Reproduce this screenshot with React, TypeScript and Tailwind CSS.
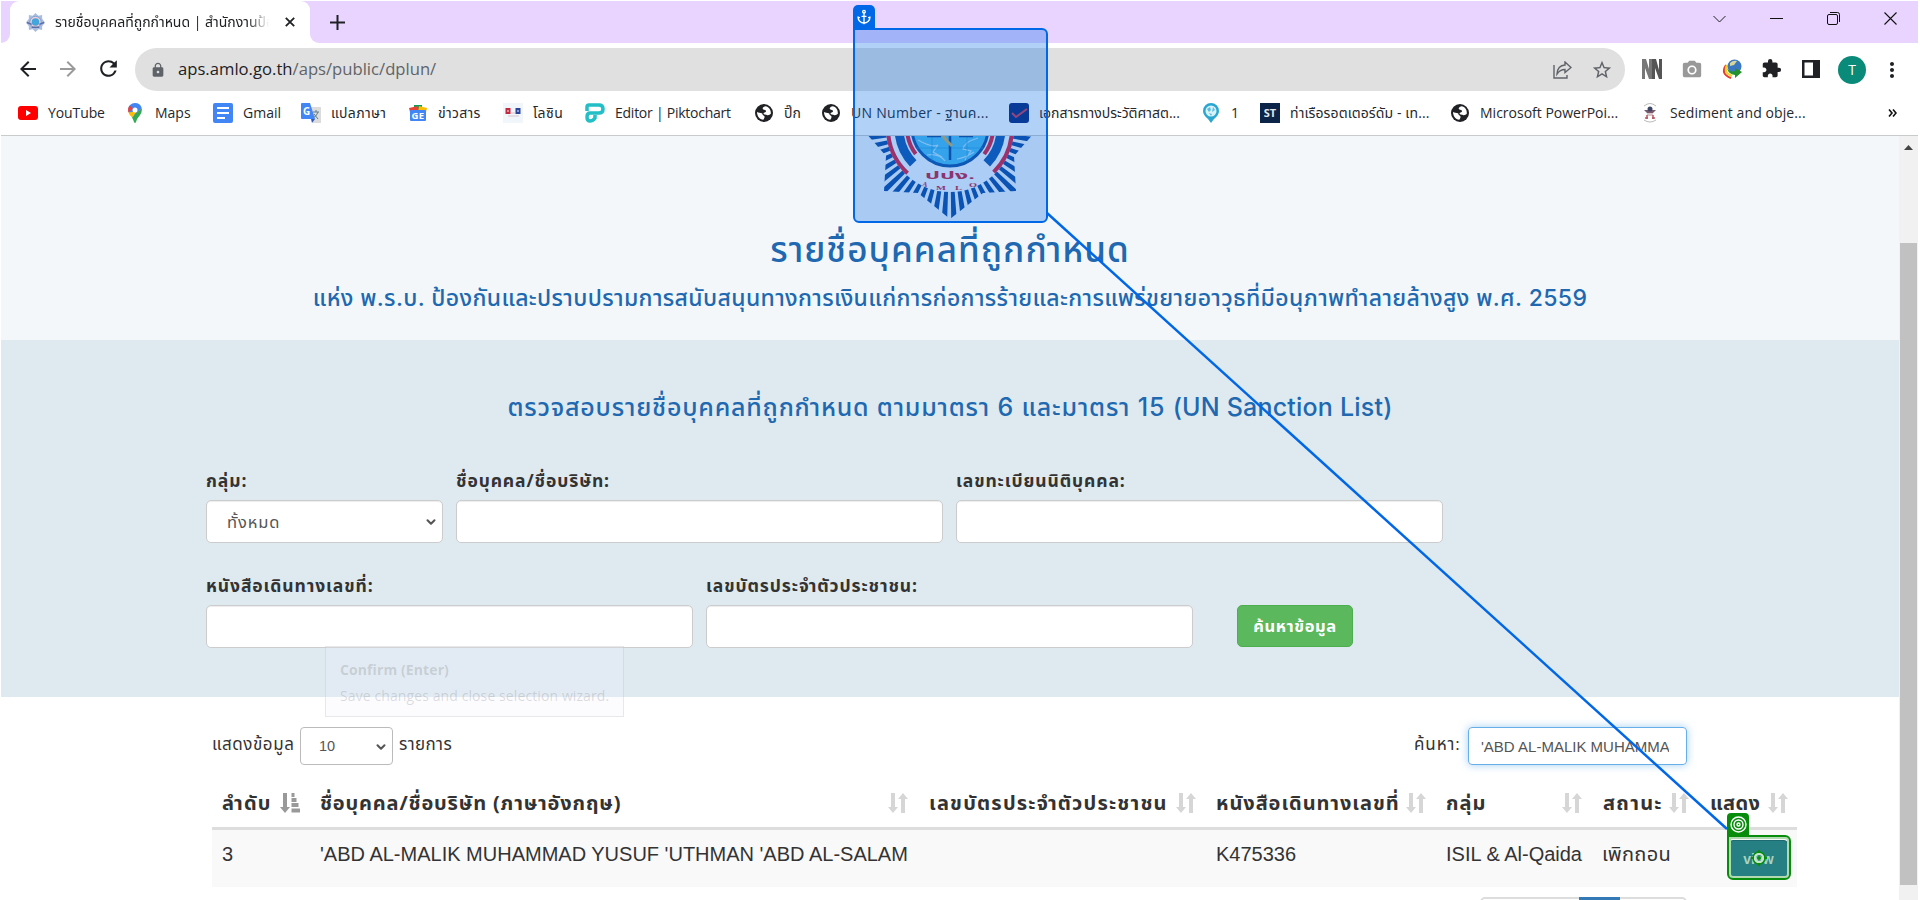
import type { ReactNode } from "react";
import { Anchor, ChevronDown } from "lucide-react";
import {
  MdArrowBack,
  MdArrowForward,
  MdCameraAlt,
  MdExtension,
  MdLock,
  MdMoreVert,
  MdRefresh,
  MdStarBorder,
} from "react-icons/md";

const UI = "font-['Open_Sans','Noto_Sans_Thai',sans-serif]";
const HEADING = "font-['Inter','Noto_Sans_Thai',sans-serif] font-medium whitespace-nowrap";

function Emblem() {
  return (
    <svg width="170" height="84" viewBox="0 0 170 84" className="block">
      <defs>
        <clipPath id="star">
          <path d="M0 -4H170L149 20L151 55L118 57L85 83L53 57L19 55L21 20Z" />
        </clipPath>
      </defs>
      <circle cx="85" cy="-8" r="75" fill="none" stroke="#0f4aa0" strokeWidth="50" strokeDasharray="4.600 3.400" clipPath="url(#star)" />
      <circle cx="85" cy="-8" r="64" fill="#f7f9fd" />
      <circle cx="85" cy="-8" r="62" fill="none" stroke="#e01c38" strokeWidth="4" strokeDasharray="50 95 50 500" transform="rotate(-1 85 -8)" />
      <circle cx="85" cy="-8" r="51" fill="none" stroke="#1357ab" strokeWidth="9" strokeDasharray="39 82 39 500" />
      <circle cx="85" cy="-8" r="43" fill="none" stroke="#e01c38" strokeWidth="4" strokeDasharray="28 79 28 500" />
      <circle cx="85" cy="-8" r="38" fill="#4dbdf0" stroke="#1352a2" strokeWidth="3" />
      <path d="M53 4q14 8 20 5l-5 7 9 5M113 2q-14 4-15 11l8 2-6 9M62 19q12-2 18 6M92 23q8-1 17-7" fill="none" stroke="#b7e3f7" strokeWidth="1.2" />
      <path d="M67 -5v30M102 -5v30M52 12h66" stroke="#2793cf" strokeWidth=".6" />
      <path d="M85 0v24M62 0h14M94 0h14" stroke="#114994" strokeWidth="2.5" />
      <path d="M78 0l4 5 5 5" fill="none" stroke="#cfae58" strokeWidth="3" />
      <text x="85" y="42.500" fill="#c91f3c" fontSize="10.500" fontWeight="700" textAnchor="middle" textLength="50" lengthAdjust="spacingAndGlyphs" fontFamily="Noto Sans Thai, sans-serif">ปปง.</text>
      <g fill="#c91f3c" fontSize="7" fontWeight="700" fontFamily="Liberation Serif" lengthAdjust="spacingAndGlyphs">
        <text x="57" y="50" rotate="14">A</text>
        <text x="71" y="53.500" textLength="10" lengthAdjust="spacingAndGlyphs">M</text>
        <text x="90" y="53.500" textLength="7" lengthAdjust="spacingAndGlyphs">L</text>
        <text x="104" y="50.500" textLength="8" lengthAdjust="spacingAndGlyphs">O</text>
      </g>
    </svg>
  );
}

function Favicon() {
  return (
    <svg width="19" height="19" viewBox="0 0 20 20">
      <path d="M10 0l3 3 4-1 0 4 3 4-3 4 0 4-4-1-3 3-3-3-4 1 0-4-3-4 3-4 0-4 4 1z" fill="#a9bedf" />
      <circle cx="10" cy="9.500" r="6" fill="#f3cdd6" stroke="#7e9ed0" />
      <circle cx="10" cy="9.500" r="4" fill="#42a5dc" />
      <path d="M1 10l5 2M19 10l-5 2M6 15h8" stroke="#5b6ea8" strokeWidth="1.500" />
    </svg>
  );
}

function Globe() {
  return (
    <svg width="18" height="18" viewBox="0 0 18 18">
      <circle cx="9" cy="9" r="9" fill="#202124" />
      <path d="M2 8c1.500 1 3.500.5 4.800 1.300s.2 1.700 1.800 2.200 1 2.500-.3 4.300C4.500 15.500 2 12 2 8zM9 2.800c-2 1.200-1.500 2.500 0 3s2 .5 2 1.600-2.500.6-2.500 2 2.500 1 3.500 1.600 3-.2 3.800-1.200C16.200 6 14 2.800 10.500 2.300z" fill="#fff" />
    </svg>
  );
}

const icons: Record<string, ReactNode> = {
  youtube: (
    <svg width="20" height="14" viewBox="0 0 20 14">
      <rect width="20" height="14" rx="3" fill="#f00" />
      <path d="M8 4l5 3-5 3z" fill="#fff" />
    </svg>
  ),
  maps: (
    <svg width="20" height="20" viewBox="0 0 20 20">
      <path d="M10 0a7 7 0 0 1 6.700 5L10 13 5 11Q3 8.500 3 7a7 7 0 0 1 7-7z" fill="#4285f4" />
      <path d="M4.700 2.500L8 5.400 3.400 9.500Q2.400 5 4.700 2.500z" fill="#ea4335" />
      <path d="M3.400 9.500L12.500 8 7 14.500Q4.500 12 3.400 9.500z" fill="#fbbc04" />
      <path d="M16.700 5q.8 4-2 7.500-3.200 3.500-3.700 6.500-1 2-2 0-.6-2-2-4.500z" fill="#34a853" />
      <circle cx="10" cy="7" r="2.500" fill="#fff" />
    </svg>
  ),
  docs: (
    <svg width="20" height="20" viewBox="0 0 20 20">
      <rect width="20" height="20" rx="2" fill="#4285f4" />
      <path d="M4 5h12M4 10h12M4 15h8" stroke="#fff" strokeWidth="2" />
    </svg>
  ),
  translate: (
    <svg width="20" height="20" viewBox="0 0 20 20">
      <path d="M8 4h12v16H12z" fill="#dcdcdc" />
      <path d="M12 9h6M15 7v2M17 9q-1 4-5 6M13 11l4 5" stroke="#607d8b" fill="none" />
      <path d="M1 0h8l5 16H1q-1 0-1-1V1q0-1 1-1z" fill="#4285f4" />
      <path d="M10 16h4l-3 4z" fill="#3059b8" />
      <text x="2" y="12" fontSize="10" fontWeight="700" fill="#fff" fontFamily="Open Sans">G</text>
    </svg>
  ),
  news: (
    <svg width="20" height="20" viewBox="0 0 20 20">
      <path d="M6 2h8v6H6z" fill="#0f9d58" />
      <path d="M1 5l9-2 1 6H2z" fill="#ea4335" />
      <path d="M11 3l8 2-1 5h-8z" fill="#fbbc04" />
      <rect x="2" y="7" width="16" height="11" rx="1" fill="#4285f4" />
      <text x="3.500" y="15.500" fontSize="8.500" fontWeight="700" fill="#fff" fontFamily="Open Sans" textLength="13" lengthAdjust="spacingAndGlyphs">GE</text>
    </svg>
  ),
  logistics: (
    <svg width="20" height="20" viewBox="0 0 20 20">
      <rect width="20" height="20" fill="#f1f6fb" />
      <rect x="3.500" y="6" width="3" height="4" fill="none" stroke="#c3283f" strokeWidth="2" />
      <rect x="13.500" y="6" width="3" height="4" fill="none" stroke="#2b459a" strokeWidth="2" />
      <path d="M5 13h11M8 10h4" stroke="#e4dde3" strokeWidth="2" />
    </svg>
  ),
  pikto: (
    <svg width="20" height="20" viewBox="0 0 20 20">
      <path d="M2 8V4q0-2 2-2h10q4 0 4 4t-4 4H5q-3 0-3 4t3 4 5-3v-3" fill="none" stroke="#22bfc6" strokeWidth="3.500" />
    </svg>
  ),
  globe: <Globe />,
  check: (
    <svg width="20" height="20" viewBox="0 0 20 20">
      <rect width="20" height="20" rx="3" fill="#0c2878" />
      <path d="M3 10l4 4 11-8" fill="none" stroke="#d23a50" strokeWidth="2" />
    </svg>
  ),
  pin: (
    <svg width="20" height="20" viewBox="0 0 20 20">
      <path d="M2 8a8 8 0 0 1 16 0q0 4-5 8l-3 4-3-4Q2 12 2 8z" fill="#2aa7d0" />
      <circle cx="10" cy="8" r="5.500" fill="#d9f1f8" />
      <path d="M6 6l3-2 1 3-2 2zM12 4l2 3-3 2zM8 10l3 1-1 2z" fill="#5bbfdc" />
    </svg>
  ),
  st: (
    <span className="flex size-5 items-center justify-center bg-[#0b2447] text-[11px] font-bold text-gray-200">ST</span>
  ),
  figure: (
    <svg width="20" height="20" viewBox="0 0 20 20">
      <path d="M4 3q6-5 12 0M4 17q6 4 12 0" fill="none" stroke="#bbb" />
      <path d="M4 7h12l-3 3H7z" fill="#7b5a70" />
      <circle cx="10" cy="6" r="2.500" fill="#3d4565" />
      <path d="M7 10h6v3H7z" fill="#d9c5c8" />
      <path d="M5 15h3M12 15h3M7 12v4M13 12v4" stroke="#b9545f" strokeWidth="1.500" />
    </svg>
  ),
};

const bookmarks = [
  { icon: "youtube", label: "YouTube", cls: "w-[107px] tracking-[-0.1px]" },
  { icon: "maps", label: "Maps", cls: "w-[88px]" },
  { icon: "docs", label: "Gmail", cls: "w-[88px]" },
  { icon: "translate", label: "แปลภาษา", cls: "w-[107px] tracking-[0.3px]" },
  { icon: "news", label: "ข่าวสาร", cls: "w-[95px] tracking-[0.3px]" },
  { icon: "logistics", label: "โลซิน", cls: "w-[82px] tracking-[0.4px]" },
  { icon: "pikto", label: "Editor | Piktochart", cls: "w-[169px] tracking-[-0.25px]" },
  { icon: "globe", label: "ปิ๊ก", cls: "w-[67px]" },
  { icon: "globe", label: "UN Number - ฐานค...", cls: "w-[188px] tracking-[0.3px]" },
  { icon: "check", label: "เอกสารทางประวัติศาสต...", cls: "w-[192px]" },
  { icon: "pin", label: "1", cls: "w-[59px]" },
  { icon: "st", label: "ท่าเรือรอตเตอร์ดัม - เท...", cls: "w-[190px] tracking-[0.1px]" },
  { icon: "globe", label: "Microsoft PowerPoi...", cls: "w-[190px]" },
  { icon: "figure", label: "Sediment and obje...", cls: "w-[248px] tracking-[0.1px]" },
];

function TabStrip() {
  return (
    <div className="flex h-[42px] bg-[#e8d4ff]">
      <div className="w-[9px] bg-white">
        <div className="h-full rounded-br-[9px] bg-[#e8d4ff]" />
      </div>
      <div className="flex w-[300px] items-center rounded-t-[9px] bg-white pl-4">
        <Favicon />
        <span className="ml-2.5 w-[214px] overflow-hidden whitespace-nowrap text-[14px] leading-6 text-[#202124] [mask-image:linear-gradient(90deg,#000_90%,transparent)]">
          รายชื่อบุคคลที่ถูกกำหนด | สำนักงานป้องกัน
        </span>
        <svg width="10" height="10" viewBox="0 0 10 10" className="ml-4">
          <path d="M.8.8l8.400 8.400M9.200.8L.8 9.200" stroke="#202124" strokeWidth="1.800" />
        </svg>
      </div>
      <div className="bg-white">
        <div className="flex h-full items-center rounded-bl-[9px] bg-[#e8d4ff] pl-5">
          <svg width="15" height="15" viewBox="0 0 15 15">
            <path d="M7.500 0v15M0 7.500h15" stroke="#202124" strokeWidth="2" />
          </svg>
        </div>
      </div>
      <div className="ml-auto flex h-[35px] items-center gap-[44px] pr-[21px]">
        <svg width="13" height="8" viewBox="0 0 13 8"><path d="M.5 1l6 6 6-6" fill="none" stroke="#222" /></svg>
        <svg width="13" height="2" viewBox="0 0 13 2"><path d="M0 .5h13" stroke="#111" /></svg>
        <svg width="13" height="13" viewBox="0 0 13 13" fill="none" stroke="#111">
          <rect x=".5" y="2.500" width="10" height="10" rx="1.500" />
          <path d="M3 .5h7.500q2 0 2 2V10" />
        </svg>
        <svg width="13" height="13" viewBox="0 0 13 13"><path d="M.5.5l12 12M12.500.5l-12 12" stroke="#111" strokeWidth="1.100" /></svg>
      </div>
    </div>
  );
}

function Toolbar() {
  return (
    <div className="flex h-[48px] items-center bg-white pt-[5px] pl-[15px]">
      <MdArrowBack className="-mt-0.5 size-6 text-[#202124]" />
      <MdArrowForward className="-mt-0.5 ml-4 size-6 text-[#9a9a9a]" />
      <MdRefresh className="-mt-0.5 ml-4 size-[25px] text-[#202124]" />
      <div className="ml-[14px] flex h-[43px] w-[1490px] items-center rounded-full bg-[#e0e0e0] pl-[15px] text-[#5f6368]">
        <MdLock className="size-4" />
        <span className="ml-3 text-[16.650px] text-[#606468]">
          <span className="text-[#202124]">aps.amlo.go.th</span>/aps/public/dplun/
        </span>
        <svg width="19" height="18" viewBox="0 0 19 18" fill="none" stroke="#5f6368" strokeWidth="1.400" className="ml-auto">
          <path d="M1 4v13h13v-3" />
          <path d="M12 1l6 5.500-6 5v-3Q7 8.500 4 13q.5-8.500 8-9z" />
        </svg>
        <MdStarBorder className="mr-[12px] ml-[19px] size-[22px]" />
      </div>
      <svg width="20" height="20" viewBox="0 0 20 20" className="-mt-0.5 ml-[17px]">
        <path d="M0 0h4l3 10V0h3v20H7L3 9v11H0z" fill="#777" />
        <path d="M10 0h4l3 11V0h3v20h-3l-4-11v11h-3z" fill="#555" />
      </svg>
      <MdCameraAlt className="ml-[19px] size-[22px] text-[#999]" />
      <svg width="20" height="20" viewBox="0 0 20 20" className="-mt-0.5 ml-[19px]">
        <path d="M4 6Q-2 15 9 19" fill="none" stroke="#e33b2e" strokeWidth="2" />
        <path d="M5 6Q1 14 10 17" fill="none" stroke="#f5d327" strokeWidth="2" />
        <circle cx="12.500" cy="7.500" r="7" fill="#3c78c0" />
        <path d="M8 4q3-3 7-2l-3 4-4 1z" fill="#d8d79a" />
        <path d="M5 9q3 5 8 3v-3l7 4-7 6v-3Q6 15 5 9z" fill="#23912c" />
      </svg>
      <MdExtension className="-mt-0.5 ml-[19px] size-[21px] text-[#202124]" />
      <svg width="18" height="18" viewBox="0 0 18 18" className="-mt-0.5 ml-[20px]">
        <path d="M0 0h18v18H0zM2.500 2.500v13H11v-13z" fill="#202124" fillRule="evenodd" />
      </svg>
      <span className="ml-[18px] flex size-7 items-center justify-center rounded-full bg-[#0a8a78] text-sm text-white">T</span>
      <MdMoreVert className="ml-[14px] size-[24px] text-[#202124]" />
    </div>
  );
}

function BookmarkBar() {
  return (
    <div className="flex h-[45px] items-center border-b border-[#c9cacc] bg-white pl-[17px] text-[14px] text-[#25282c]">
      {bookmarks.map((b) => (
        <div key={b.label} className={`flex shrink-0 items-center whitespace-nowrap ${b.cls}`}>
          <span className="flex w-5 shrink-0 justify-center">{icons[b.icon]}</span>
          <span className="ml-2.5 leading-6">{b.label}</span>
        </div>
      ))}
      <svg width="9" height="8" viewBox="0 0 9 8"><path d="M1 .5L4 4 1 7.500M5 .5L8 4 5 7.500" fill="none" stroke="#111" strokeWidth="1.600" /></svg>
    </div>
  );
}

function Field({ label, cls, children }: { label: string; cls: string; children?: ReactNode }) {
  return (
    <div className={cls}>
      <div className="h-[32px] whitespace-nowrap text-[17.500px] leading-[24px] font-bold tracking-[0.9px] text-[#333]">{label}</div>
      <div className="flex h-[43px] items-center rounded-[5px] border border-[#ccc] bg-white pr-[4px] pl-5 text-[16.500px] text-[#555] shadow-[inset_0_1px_1px_rgba(0,0,0,0.075)]">
        {children}
      </div>
    </div>
  );
}

function Sort({ active }: { active?: boolean }) {
  return active ? (
    <svg width="20" height="20" viewBox="0 0 20 20" fill="#999" className="shrink-0">
      <path d="M3 0h4v14h3l-5 6-5-6h3zM11.500 0h3v4h-3zM11.500 5h5v4h-5zM11.500 10h7v4h-7zM11.500 15.500h8.500v4h-8.500z" />
    </svg>
  ) : (
    <svg width="20" height="20" viewBox="0 0 20 20" fill="#d6d6d6" className="shrink-0">
      <path d="M3 0h4v14h3l-5 6-5-6h3zM13 20h4V6h3l-5-6-5 6h3z" />
    </svg>
  );
}

const columns = [
  { label: "ลำดับ", cls: "pr-[10px] tracking-[1.2px]", active: true },
  { label: "ชื่อบุคคล/ชื่อบริษัท (ภาษาอังกฤษ)", cls: "pr-[11px] tracking-[0.85px]" },
  { label: "เลขบัตรประจำตัวประชาชน", cls: "pr-[10px] tracking-[1.2px]" },
  { label: "หนังสือเดินทางเลขที่", cls: "pr-[10px] tracking-[0.95px]" },
  { label: "กลุ่ม", cls: "pr-[11px] tracking-[1px]" },
  { label: "สถานะ", cls: "pr-[11px] tracking-[1.3px]" },
  { label: "แสดง", cls: "pr-[9px] tracking-[0.3px]" },
];

const GRID = "grid grid-cols-[98px_609px_287px_230px_157px_107px_97px]";

function ResultsTable() {
  return (
    <div className="w-[1585px]">
      <div className={`${GRID} h-[65px] items-center border-b-[3px] border-[#ddd] pt-[13px] text-[20px] font-bold text-[#333]`}>
        {columns.map((c) => (
          <div key={c.label} className={`flex items-center justify-between pl-[10px] whitespace-nowrap ${c.cls}`}>
            <span className="leading-8">{c.label}</span>
            <Sort active={c.active} />
          </div>
        ))}
      </div>
      <div className={`${GRID} h-[57px] bg-[#f9f9f9] pt-[8px] font-['Liberation_Sans','Noto_Sans_Thai',sans-serif] text-[20px] leading-8 whitespace-nowrap text-[#333]`}>
        <span className="pl-[10px]">3</span>
        <span className="pl-[10px]">'ABD AL-MALIK MUHAMMAD YUSUF 'UTHMAN 'ABD AL-SALAM</span>
        <span />
        <span className="pl-[10px]">K475336</span>
        <span className="pl-[10px]">ISIL &amp; Al-Qaida</span>
        <span className="pl-[9px] tracking-[0.3px]">เพิกถอน</span>
        <span className="pt-[2px] pl-[29px]">
          <button className="flex h-[38px] w-[59px] items-center justify-center rounded-[4px] border border-[#1d6b70] bg-[#267f82] text-[14px] font-bold text-[#a9d2bf]">
            view
          </button>
        </span>
      </div>
    </div>
  );
}

function Annotations() {
  return (
    <>
      <svg className="pointer-events-none absolute inset-0" width="1920" height="900">
        <path d="M1047 213L1727 829" stroke="#0067e6" strokeWidth="2.500" />
      </svg>
      <div className="absolute top-[5px] left-[853px] flex h-[23px] w-[22px] items-center justify-center rounded-t-[5px] bg-[#0067e6] text-white">
        <Anchor size={16} />
      </div>
      <div className="absolute top-[28px] left-[853px] h-[195px] w-[195px] rounded-[6px] rounded-tl-none border-2 border-[#0067e6] bg-[#0067e6]/30" />
      <div className="absolute top-[646px] left-[325px] h-[71px] w-[299px] border border-[#aaa]/25 bg-[#eeeeff]/20 pt-[10px] pl-[14px] text-[14px] leading-[26px] tracking-[0.1px] text-[#777]/25">
        <div className="font-bold">Confirm (Enter)</div>
        <div className="whitespace-nowrap">Save changes and close selection wizard.</div>
      </div>
      <div className="absolute top-[813px] left-[1727px] flex h-[23px] w-[22px] items-center justify-center rounded-t-[4px] bg-[#078c0c]">
        <svg width="17" height="17" viewBox="0 0 17 17" fill="none" stroke="#fff" strokeWidth="1.400">
          <circle cx="8.500" cy="8.500" r="7.500" />
          <circle cx="8.500" cy="8.500" r="4.500" />
          <circle cx="8.500" cy="8.500" r="1.500" />
        </svg>
      </div>
      <div className="absolute top-[835px] left-[1727px] flex h-[45px] w-[64px] items-center justify-center rounded-[6px] rounded-tl-none border-2 border-[#078c0c] shadow-[inset_0_0_0_2px_#b1dab3]">
        <svg width="16" height="16" viewBox="0 0 16 16">
          <circle cx="8" cy="8" r="4.500" fill="none" stroke="#c5e4cb" strokeWidth="3" />
          <circle cx="8" cy="8" r="6" fill="none" stroke="#078c0c" strokeWidth="1.500" />
          <circle cx="8" cy="8" r="2" fill="#078c0c" />
          <path d="M8 0v3M8 13v3M0 8h3M13 8h3" stroke="#078c0c" strokeWidth="2" />
        </svg>
      </div>
    </>
  );
}

export default function App() {
  return (
    <div className={`relative flex h-[900px] w-[1920px] flex-col overflow-hidden bg-white px-px pt-px pr-[2px] ${UI}`}>
      <TabStrip />
      <Toolbar />
      <BookmarkBar />
      <div className="flex min-h-0 flex-1">
        <main className="w-[1898px] overflow-hidden">
          <section className="flex h-[204px] flex-col items-center bg-[#f3f7fa] text-[#2068b0]">
            <Emblem />
            <h1 className={`mt-px text-[35px] leading-[56px] tracking-[1.05px] ${HEADING}`}>รายชื่อบุคคลที่ถูกกำหนด</h1>
            <h2 className={`mt-[3px] text-[23px] leading-[36px] tracking-[0.36px] ${HEADING}`}>
              แห่ง พ.ร.บ. ป้องกันและปราบปรามการสนับสนุนทางการเงินแก่การก่อการร้ายและการแพร่ขยายอาวุธที่มีอนุภาพทำลายล้างสูง พ.ศ. 2559
            </h2>
          </section>
          <section className="h-[357px] bg-[#dfeaf0] pt-[46px]">
            <h2 className={`text-center text-[25px] leading-[42px] text-[#2068b0] ${HEADING}`}>
              <span className="tracking-[0.8px]">ตรวจสอบรายชื่อบุคคลที่ถูกกำหนด ตามมาตรา 6 และมาตรา 15 </span>
              <span className="tracking-[0.2px]">(UN Sanction List)</span>
            </h2>
            <div className="mt-[40px] flex gap-[13px] pl-[205px]">
              <Field label="กลุ่ม:" cls="w-[237px]">
                <span className="leading-7 tracking-[0.9px]">ทั้งหมด</span>
                <ChevronDown size={14} strokeWidth={3.5} className="ml-auto" />
              </Field>
              <Field label="ชื่อบุคคล/ชื่อบริษัท:" cls="w-[487px]" />
              <Field label="เลขทะเบียนนิติบุคคล:" cls="w-[487px]" />
            </div>
            <div className="mt-[30px] flex gap-[13px] pl-[205px]">
              <Field label="หนังสือเดินทางเลขที่:" cls="w-[487px]" />
              <Field label="เลขบัตรประจำตัวประชาชน:" cls="w-[487px]" />
              <button className="mt-[32px] ml-[31px] h-[42px] w-[116px] rounded-[5px] border border-[#4cae4c] bg-[#5cb85c] text-[16.500px] font-bold tracking-[0.6px] whitespace-nowrap text-white">
                ค้นหาข้อมูล
              </button>
            </div>
          </section>
          <section className="pt-[30px] pl-[211px]">
            <div className="flex h-[38px] w-[1475px] items-center text-[17px] whitespace-nowrap text-[#333]">
              <span className="-mt-[4px] w-[88px] leading-7 tracking-[0.55px]">แสดงข้อมูล</span>
              <span className="flex h-[38px] w-[93px] items-center rounded-[4px] border border-[#bbb] pt-px pr-1 pl-[18px] font-['Liberation_Sans'] text-[14.500px] text-[#555]">
                10
                <ChevronDown size={14} strokeWidth={3.5} className="ml-auto" />
              </span>
              <span className="-mt-[4px] ml-[6px] leading-7 tracking-[0.4px]">รายการ</span>
              <span className="-mt-[4px] ml-auto w-[54px] leading-7 tracking-[0.9px]">ค้นหา:</span>
              <span className="flex h-[38px] w-[219px] items-center overflow-hidden rounded-[4px] border border-[#66afe9] px-3 pt-[2px] font-['Liberation_Sans'] text-[15px] text-[#555] shadow-[0_0_9px_rgba(102,175,233,0.6)]">
                <span className="w-[188px] overflow-hidden">'ABD AL-MALIK MUHAMMAD</span>
              </span>
            </div>
            <ResultsTable />
            <div className="mt-[10px] ml-[1268px] flex h-[40px] w-[207px] rounded-[5px] border-2 border-[#ddd]">
              <div className="-mt-[2px] ml-[97px] h-[40px] w-[41px] bg-[#337ab7]" />
            </div>
          </section>
        </main>
        <aside className="flex w-[19px] flex-col items-center bg-[#f1f1f1] pt-[9px]">
          <svg width="9" height="5" viewBox="0 0 9 5"><path d="M0 5L4.500 0 9 5z" fill="#444" /></svg>
          <div className="mt-[93px] h-[642px] w-[17px] bg-[#c1c1c1]" />
        </aside>
      </div>
      <Annotations />
    </div>
  );
}
